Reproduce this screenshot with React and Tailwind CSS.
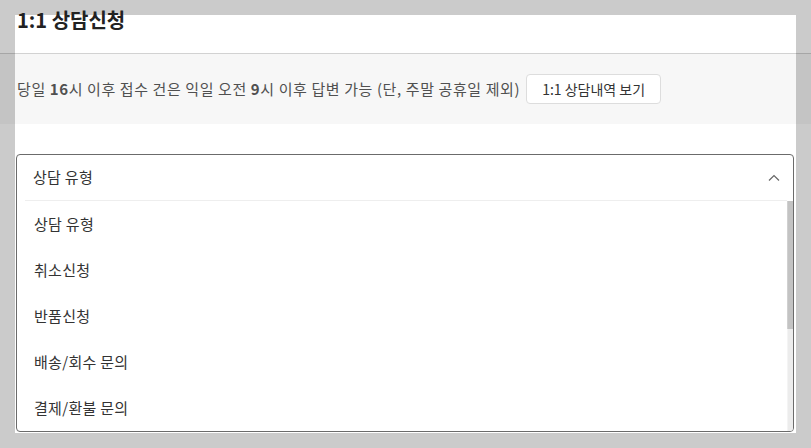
import React from "react";

const items = ["상담 유형", "취소신청", "반품신청", "배송/회수 문의", "결제/환불 문의"];

export default function App() {
  return (
    <div className="w-[811px] h-[448px] bg-[#cbcbcb] overflow-hidden px-[15px] pt-[15px] font-['Noto_Sans_CJK_KR','Noto_Sans',sans-serif]">
      <div className="bg-white h-[418px] flex flex-col">
        <div className="h-[38px] shrink-0">
          <h2 className="-mt-[9px] ml-[2px] text-[20px] leading-[28px] font-bold text-[#222]">1:1 상담신청</h2>
        </div>
        <div className="-mx-[15px] h-[71px] shrink-0 border-t border-black/15 bg-black/[0.03] flex items-center pl-[17px] gap-[6px]">
          <p className="text-[15px] tracking-[0.6px] text-[#505050]">
            당일 <b className="font-bold">16</b>시 이후 접수 건은 익일 오전 <b className="font-bold">9</b>시 이후 답변 가능 (단, 주말 공휴일 제외)
          </p>
          <button className="h-[30px] px-[15px] border border-[#dddddd] rounded-[4px] bg-white text-[14px] text-[#333]">
            1:1 상담내역 보기
          </button>
        </div>
        <div className="mt-[30px] ml-[1px] w-[778px] h-[278px] border border-[#6b6b6b] rounded-[4px] overflow-hidden flex flex-col">
          <div className="h-[45px] shrink-0 flex items-center justify-between pl-[16px] pr-[13px]">
            <span className="text-[15px] tracking-[0.3px] text-[#333]">상담 유형</span>
            <svg width="12" height="8" viewBox="0 0 12 8" fill="none">
              <path d="M1 6.5 L6 1.5 L11 6.5" stroke="#666" strokeWidth="1.2" />
            </svg>
          </div>
          <div className="flex-1 flex ml-[8px] min-h-0">
            <div className="flex-1 border-t border-[#eeeeee] overflow-hidden">
              {items.map((t) => (
                <div key={t} className="h-[46px] flex items-center pl-[9px] text-[15px] tracking-[0.3px] text-[#333]">
                  {t}
                </div>
              ))}
            </div>
            <div className="w-[6px] mt-[1px] flex flex-col">
              <div className="h-[128px] bg-[#c3c3c3] border-l border-[#d0d0d0]" />
              <div className="flex-1 bg-[#ececec] border-l border-[#f4f4f4]" />
            </div>
          </div>
        </div>
      </div>
    </div>
  );
}
